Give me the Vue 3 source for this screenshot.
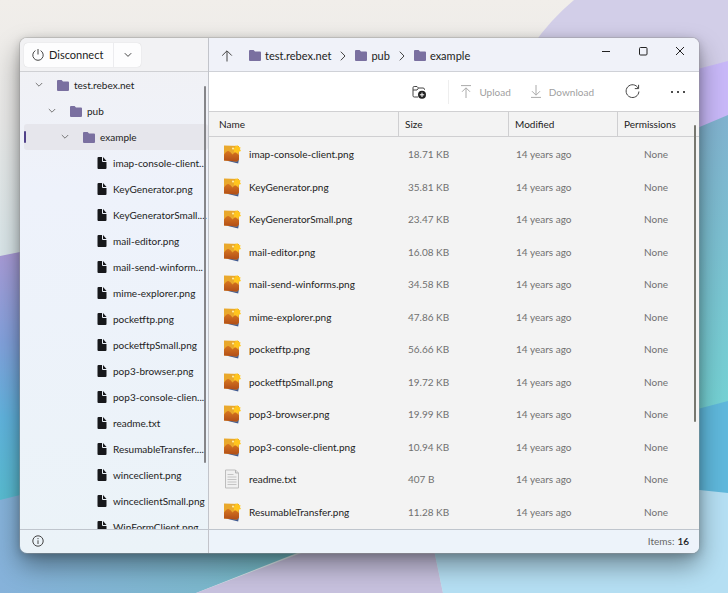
<script setup>
const treeFiles = [
  'imap-console-client...', 'KeyGenerator.png', 'KeyGeneratorSmall....', 'mail-editor.png',
  'mail-send-winform...', 'mime-explorer.png', 'pocketftp.png', 'pocketftpSmall.png',
  'pop3-browser.png', 'pop3-console-clien...', 'readme.txt', 'ResumableTransfer....',
  'winceclient.png', 'winceclientSmall.png', 'WinFormClient.png',
]
const folders = ['test.rebex.net', 'pub', 'example']
const files = [
  ['imap-console-client.png', '18.71 KB'],
  ['KeyGenerator.png', '35.81 KB'],
  ['KeyGeneratorSmall.png', '23.47 KB'],
  ['mail-editor.png', '16.08 KB'],
  ['mail-send-winforms.png', '34.58 KB'],
  ['mime-explorer.png', '47.86 KB'],
  ['pocketftp.png', '56.66 KB'],
  ['pocketftpSmall.png', '19.72 KB'],
  ['pop3-browser.png', '19.99 KB'],
  ['pop3-console-client.png', '10.94 KB'],
  ['readme.txt', '407 B'],
  ['ResumableTransfer.png', '11.28 KB'],
]
</script>

<template>
  <div class="desktop">
    <svg class="wallpaper" viewBox="0 0 728 593" preserveAspectRatio="none" aria-hidden="true">
      <defs>
        <linearGradient id="w-top" x1="0" y1="0" x2="0" y2="1">
          <stop offset="0" stop-color="#f1eeea" /><stop offset=".2" stop-color="#e9e9e8" /><stop offset=".43" stop-color="#d9e6e9" />
        </linearGradient>
        <linearGradient id="w-left" x1="0" y1="0" x2="0" y2="1">
          <stop offset="0" stop-color="#ab9bd6" /><stop offset=".35" stop-color="#83a1dc" /><stop offset=".65" stop-color="#60b3dd" /><stop offset="1" stop-color="#57bdcf" />
        </linearGradient>
        <linearGradient id="w-right" x1="0" y1="0" x2="0" y2="1">
          <stop offset="0" stop-color="#81b2cf" /><stop offset="1" stop-color="#74d3d4" />
        </linearGradient>
        <linearGradient id="w-teal" x1="0" y1="0" x2="1" y2="0">
          <stop offset="0" stop-color="#86b2da" /><stop offset=".6" stop-color="#7cb7cd" /><stop offset="1" stop-color="#6cb9be" />
        </linearGradient>
      </defs>
      <rect width="728" height="593" fill="url(#w-top)" />
      <path d="M574 0Q550 20 533 45L640 140H728V0Z" fill="#d2cee8" />
      <path d="M728 61L690 71V140H728Z" fill="#c8b8f8" />
      <path d="M728 115L690 131V420H728Z" fill="url(#w-right)" />
      <path d="M728 401L690 411V500H728Z" fill="#5fb8dc" />
      <path d="M0 256L40 248V510H0Z" fill="url(#w-left)" />
      <path d="M0 500L40 490V540H330L196 593H0Z" fill="url(#w-teal)" />
      <path d="M336 540L196 593H443L432 540Z" fill="#c7c1de" />
      <path d="M432 540L443 593H728V493L690 489V540Z" fill="#b5dff3" />
    </svg>

    <main class="window">
      <aside class="sidebar">
        <header class="connection">
          <div class="split">
            <button class="disconnect">
              <svg width="14" height="14" viewBox="0 0 14 14"><path d="M7 1v5.5M4.4 2.6a5.2 5.2 0 1 0 5.2 0" /></svg>
              Disconnect
            </button>
            <button class="more" aria-label="Connection options">
              <svg width="8" height="6" viewBox="0 0 8 6"><path d="M.8 1.2L4 4.4l3.200-3.200" /></svg>
            </button>
          </div>
        </header>
        <div class="tree">
          <ul>
            <li v-for="(name, i) in folders" :key="name" :class="['node', 'level-' + i, { selected: i === 2 }]">
              <svg class="caret" width="8" height="6" viewBox="0 0 8 6"><path d="M.8 1L4 4.200l3.200-3.200" /></svg>
              <svg class="folder" width="12" height="11" viewBox="0 0 12 11"><path d="M0 1Q0 0 1 0h3.600l1.400 1.500H11q1 0 1 1V10q0 1-1 1H1q-1 0-1-1Z" /></svg>
              <span>{{ name }}</span>
            </li>
            <li v-for="name in treeFiles" :key="name" class="node leaf">
              <svg class="page" width="10" height="12" viewBox="0 0 10 12"><path d="M1.500 0H5v4q0 1 1 1h3.500v6q0 1-1 1h-7q-1 0-1-1V1q0-1 1-1Z" /><path d="M6 0l3.500 4H6Z" /></svg>
              <span>{{ name }}</span>
            </li>
          </ul>
        </div>
        <footer class="status">
          <button class="info" aria-label="Information">
            <svg width="12" height="12" viewBox="0 0 12 12"><circle cx="6" cy="6" r="5.200" /><path d="M6 5.300V9M6 3v1.200" /></svg>
          </button>
        </footer>
      </aside>

      <section class="content">
        <header class="titlebar">
          <button class="up" aria-label="Up one level">
            <svg width="12" height="12" viewBox="0 0 12 12"><path d="M6 11.500V1M1.200 5.600L6 .8l4.800 4.800" /></svg>
          </button>
          <nav class="crumbs" aria-label="Path">
            <template v-for="(name, i) in folders" :key="name">
              <svg v-if="i" class="sep" width="6" height="10" viewBox="0 0 6 10"><path d="M.8.7L5 5 .8 9.300" /></svg>
              <a href="#">
                <svg class="folder" width="12" height="11" viewBox="0 0 12 11"><path d="M0 1Q0 0 1 0h3.600l1.400 1.500H11q1 0 1 1V10q0 1-1 1H1q-1 0-1-1Z" /></svg>
                {{ name }}
              </a>
            </template>
          </nav>
          <div class="controls">
            <button aria-label="Minimize"><svg width="10" height="10" viewBox="0 0 10 10"><path d="M1 5.500h8" /></svg></button>
            <button aria-label="Maximize"><svg width="10" height="10" viewBox="0 0 10 10"><rect x="1.500" y="1.500" width="7.500" height="7.500" rx="1" /></svg></button>
            <button aria-label="Close"><svg width="10" height="10" viewBox="0 0 10 10"><path d="M1 1l8 8M9 1L1 9" /></svg></button>
          </div>
        </header>

        <div class="toolbar">
          <button class="tool new-folder" aria-label="New folder">
            <svg width="14" height="14" viewBox="0 0 14 14">
              <path d="M6 12H2.200Q1 12 1 10.800V2.700Q1 1.500 2.200 1.500H5L6.500 3H11q1.500 0 1.500 1.500V5M1 5h4l1.500-2" />
              <circle cx="10" cy="9.800" r="4" class="disc" /><path class="plus" d="M10 7.600V12M7.800 9.800h4.400" />
            </svg>
          </button>
          <button class="tool upload" disabled>
            <svg width="10" height="13" viewBox="0 0 10 13"><path d="M0 .6h10M5 13V3M1 6.800L5 2.800l4 4" /></svg>
            Upload
          </button>
          <button class="tool download" disabled>
            <svg width="10" height="13" viewBox="0 0 10 13"><path d="M0 12.400h10M5 0v10M1 6.200l4 4 4-4" /></svg>
            Download
          </button>
          <button class="tool refresh" aria-label="Refresh">
            <svg width="15" height="15" viewBox="0 0 15 15"><path d="M13.200 4.200A6.400 6.400 0 1 0 13.900 7.500M13.600.8v3.800H9.800" /></svg>
          </button>
          <button class="tool dots" aria-label="More actions">
            <svg width="16" height="4" viewBox="0 0 16 4"><circle cx="2" cy="2" r="1.100" /><circle cx="8" cy="2" r="1.100" /><circle cx="14" cy="2" r="1.100" /></svg>
          </button>
        </div>

        <table class="listing">
          <thead>
            <tr><th>Name</th><th>Size</th><th>Modified</th><th>Permissions</th></tr>
          </thead>
          <tbody>
            <tr v-for="[name, size] in files" :key="name">
              <td class="name">
                <svg v-if="name.endsWith('.txt')" width="18" height="20" viewBox="0 0 18 20">
                  <path d="M2.500 1h10L15.500 4V19H2.500Z" fill="#f0f0f0" stroke="#bdbdbd" />
                  <path d="M12.500 1v3H15.500" fill="#ddd" stroke="#b5b5b5" />
                  <path d="M4.500 5.500h6M4.500 8h9M4.500 10.500h9M4.500 13h9M4.500 15.500h9" stroke="#c4c4c4" fill="none" />
                </svg>
                <svg v-else width="18" height="20" viewBox="0 0 18 20">
                  <defs>
                    <linearGradient id="hill" x1="0" y1="0" x2="0" y2="1">
                      <stop offset="0" stop-color="#d9771f" /><stop offset="1" stop-color="#b04d18" />
                    </linearGradient>
                  </defs>
                  <path d="M4 15h12l-.8 4.500L5 17Z" fill="#405a91" />
                  <path d="M1 1.500L16 2v13.500L14 17.500 1 16.500Z" fill="#e9a82c" />
                  <path d="M1 10.500Q3.500 6.500 5.500 7t4 3.500l2.500-2.500 4 3v4.500L14 17.500 1 16.500Z" fill="url(#hill)" />
                  <path d="M14.500 1l.8 2 2.200.2-.5 2 1 1.800-2.200.8-1 1.700-1.800-1.200-2.200.2.200-2.200L10 4.500l2-1 .6-2 1.400.3Z" fill="#ffc51e" />
                  <circle cx="10" cy="4.500" r="1" fill="#fff0ad" />
                </svg>
                <span>{{ name }}</span>
              </td>
              <td>{{ size }}</td>
              <td class="date">14 years ago</td>
              <td class="perm">None</td>
            </tr>
          </tbody>
        </table>

        <footer class="status total">Items: <strong>16</strong></footer>
      </section>
    </main>
  </div>
</template>

<style>
body { margin: 0; }
</style>

<style scoped>
* { box-sizing: border-box; }
.desktop {
  position: relative;
  height: 100vh;
  padding: 38px 29px 40px 20px;
  font-family: Lato, "Open Sans", sans-serif;
  font-size: 10px;
  line-height: 16px;
  color: #222;
}
.wallpaper { position: absolute; inset: 0; width: 100%; height: 100%; }
.window {
  position: relative;
  height: 100%;
  display: grid;
  grid-template-columns: 189px 1fr;
  border-radius: 7px;
  overflow: hidden;
  background: linear-gradient(#f1f1f4, #eef2fb 30%, #ebf3f8);
  box-shadow: 0 0 0 1px #9996, 0 12px 26px #0006, 0 2px 10px #0003;
}
button { font: inherit; color: inherit; background: none; border: 0; padding: 0; display: flex; align-items: center; justify-content: center; }
svg { flex: none; display: block; }
button svg, .caret, .sep { fill: none; stroke: #444; stroke-width: 1; }
.folder { fill: #7a70a0; stroke: none; }

.sidebar { display: flex; flex-direction: column; min-height: 0; border-right: 1px solid #c2c4ca; }
.connection { height: 34px; flex: none; padding: 5px 4px; border-bottom: 1px solid #cfd0d4; background: #f2f2f4; }
.split { display: inline-flex; height: 24px; background: #fdfdfe; border-radius: 4px; box-shadow: 0 0 1px #0003; }
.disconnect { gap: 4px; padding: 0 10px 0 7px; font-size: 11px; border-right: 1px solid #ececef; }
.more { width: 27px; }
.tree { position: relative; flex: 1; min-height: 0; overflow: hidden; }
.tree::after { content: ""; position: absolute; right: 2px; top: 14px; bottom: 66px; width: 2px; border-radius: 1px; background: #858589; }
ul { list-style: none; margin: 0; padding: 0 0 0 4px; }
.node { height: 26px; display: flex; align-items: center; gap: 5px; border-radius: 3px; white-space: nowrap; }
.caret { stroke: #777; margin-right: 9px; }
.level-0 { padding-left: 11px; }
.level-1 { padding-left: 24px; }
.level-2 { padding-left: 37px; }
.leaf { padding-left: 73px; gap: 6px; }
.page { fill: #17181b; }
.selected { position: relative; background: #e6e6ec; }
.selected::before { content: ""; position: absolute; left: 0; top: 7px; width: 2px; height: 12px; border-radius: 1px; background: #51428a; }
.status { height: 24px; flex: none; display: flex; align-items: center; padding-bottom: 2px; border-top: 1px solid #bfc5cd; }
.info { margin-left: 12px; }

.content { display: flex; flex-direction: column; min-width: 0; min-height: 0; }
.titlebar { height: 34px; flex: none; display: flex; align-items: center; padding: 2px 0 0 12px; border-bottom: 1px solid #cfd1d7; background: #f0f2f9; }
.crumbs { display: flex; align-items: center; gap: 9px; margin-left: 16px; font-size: 11px; }
.crumbs a { display: flex; align-items: center; gap: 4px; color: inherit; text-decoration: none; }
.controls { display: flex; margin-left: auto; margin-right: 1px; align-self: flex-start; height: 22px; }
.controls button { width: 37px; }
.controls svg { stroke: #222; }
.toolbar { height: 40px; flex: none; display: flex; align-items: center; justify-content: flex-end; padding-right: 13px; background: #fff; border-bottom: 1px solid #d0d0d2; }
.new-folder { height: 24px; padding-right: 22px; border-right: 1px solid #eee; }
.new-folder .disc { fill: #222; stroke: none; }
.new-folder .plus { stroke: #fff; }
.upload { height: 24px; gap: 8px; margin-left: 12px; }
.download { gap: 8px; margin-left: 20px; }
.tool:disabled { color: #a0a0a0; }
.tool:disabled svg { stroke: #aaa; }
.refresh { margin-left: 31px; }
.dots { margin-left: 30px; }
.dots svg { fill: #222; stroke: none; }

.listing { position: relative; flex: 1; min-height: 0; display: grid; grid-template-rows: auto 1fr; background: #f3f3f3; }
.listing::after { content: ""; position: absolute; right: 3px; top: 13px; bottom: 107px; width: 2px; border-radius: 1px; background: #77776f; }
thead, tbody { display: grid; min-height: 0; }
tbody { padding: 1px 0; grid-auto-rows: 1fr; }
tr { display: grid; grid-template-columns: 189px 110px 109px 1fr; min-height: 0; }
thead tr { height: 25px; border-bottom: 1px solid #cfcfd1; }
th { font-weight: 400; text-align: left; padding: 4px 6px; border-left: 1px solid #cfcfd1; }
th:first-child { border: 0; padding-left: 10px; }
td { display: flex; align-items: center; padding: 0 0 0 10px; color: #707070; white-space: nowrap; }
.name { gap: 8px; padding-left: 14px; color: #222; }
.date { padding-left: 8px; }
.perm { justify-content: flex-end; padding-right: 31px; }
.total { justify-content: flex-end; gap: 3px; padding-right: 10px; color: #666; background: #edf3fa; }
.total strong { font-weight: 600; color: #222; }
</style>
